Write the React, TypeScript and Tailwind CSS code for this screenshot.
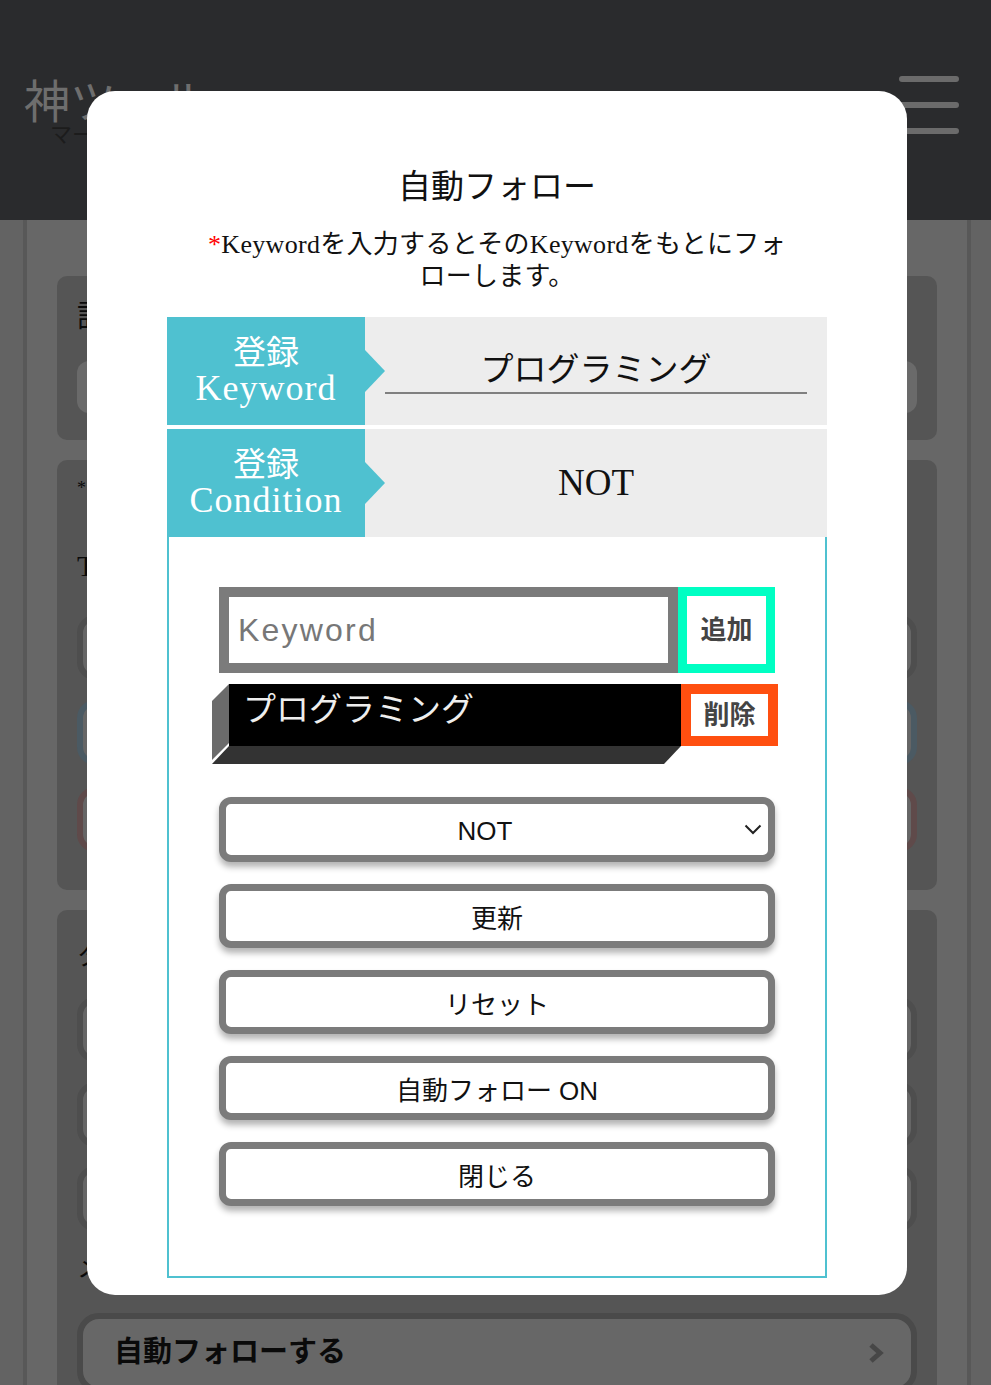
import React from 'react';

const serif = "font-['Liberation_Serif','Noto_Sans_CJK_JP',serif]";
const sans = "font-['Liberation_Sans','Noto_Sans_CJK_JP',sans-serif]";

function Hamburger() {
  return (
    <div className="flex flex-col gap-[20px] pt-0">
      <span className="block h-[6px] w-[60px] rounded-full bg-[#6b6b6b]" />
      <span className="block h-[6px] w-[60px] rounded-full bg-[#6b6b6b]" />
      <span className="block h-[6px] w-[60px] rounded-full bg-[#6b6b6b]" />
    </div>
  );
}

function BgInput({ tone }: { tone: string }) {
  return <div className={`h-[65px] rounded-[18px] border-[6px] bg-[#666666] ${tone}`} />;
}

function Background() {
  return (
    <div className="h-[1385px] w-full overflow-hidden bg-[#636363]">
      <header className="flex h-[220px] items-start justify-between bg-[#2a2b2d] pl-[24px] pr-[32px] pt-[76px]">
        <h1 className={`${serif} pt-[8px] text-[22px] leading-[24px]`}>
          <span className="text-[46px] leading-[38px] text-[#6e6e6e]">神ツール</span>
          <br />
          <span className="ml-[26px] text-[#1c1c1c]">マーケティング</span>
        </h1>
        <Hamburger />
      </header>

      <div className="ml-[23px] mr-[20px] flex h-full flex-col gap-[20px] border-x-4 border-[#585858] bg-[#676767] px-[30px] pt-[56px]">
        <section className="rounded-[10px] bg-[#555555] px-[20px] pb-[27px] pt-[22px]">
          <h3 className={`${serif} text-[30px] leading-[36px] text-[#0a0a0a]`}>設定キーワード</h3>
          <div className="mt-[27px] h-[52px] rounded-[12px] bg-[#6a6a6a]" />
        </section>

        <section className="flex flex-col rounded-[10px] bg-[#555555] px-[20px] pb-[38px] pt-[18px]">
          <p className={`${serif} text-[18px] leading-[20px] text-[#0a0a0a]`}>*アカウントを選択してください</p>
          <h3 className={`${serif} mt-[50px] text-[30px] leading-[36px] text-[#0a0a0a]`}>Twitterアカウント</h3>
          <div className="mt-[31px]"><BgInput tone="border-[#4e4e4e]" /></div>
          <div className="mt-[20px]"><BgInput tone="border-[#4b5a63]" /></div>
          <div className="mt-[22px]"><BgInput tone="border-[#5f4a4a]" /></div>
        </section>

        <section className="flex flex-col rounded-[10px] bg-[#555555] px-[20px] pt-[33px]">
          <h3 className={`${serif} text-[26px] leading-[28px] text-[#0a0a0a]`}>タイムライン</h3>
          <div className="mt-[26px]"><BgInput tone="border-[#4e4e4e]" /></div>
          <div className="mt-[20px]"><BgInput tone="border-[#4e4e4e]" /></div>
          <div className="mt-[19px]"><BgInput tone="border-[#4e4e4e]" /></div>
          <p className={`${serif} mt-[23px] text-[26px] leading-[30px] text-[#0a0a0a]`}>メモ</p>
          <button className="mt-[29px] flex h-[80px] items-center justify-between rounded-[22px] border-[6px] border-[#4a4a4a] bg-[#676767] pl-[31px] pr-[27px]">
            <span className={`${serif} text-[29px] font-bold text-[#0a0a0a]`}>自動フォローする</span>
            <svg width="16" height="22" viewBox="0 0 16 22">
              <polyline points="3,3 12,11 3,19" fill="none" stroke="#474747" strokeWidth="5" />
            </svg>
          </button>
        </section>
      </div>
    </div>
  );
}

function LabelCell({ top, bottom }: { top: string; bottom: string }) {
  return (
    <div className={`relative flex w-[198px] shrink-0 items-center justify-center bg-[#4fc1d0] text-white ${serif}`}>
      <p className="text-center text-[33px] leading-[35px]">
        {top}
        <br />
        <span className="text-[36px] tracking-[1px]">{bottom}</span>
      </p>
      <span className="absolute left-full top-1/2 z-10 -translate-y-1/2 border-y-[21px] border-l-[20px] border-y-transparent border-l-[#4fc1d0]" />
    </div>
  );
}

function ActionButton({ children }: { children: React.ReactNode }) {
  return (
    <button className={`mt-[22px] flex h-[64px] w-full items-center justify-center rounded-[12px] border-[7px] border-[#7b7b7b] bg-white pt-[6px] text-[26px] text-[#111] shadow-[0_5px_6px_rgba(0,0,0,0.3)] ${sans}`}>
      {children}
    </button>
  );
}

function AutoFollowModal() {
  return (
    <div className="absolute left-[87px] top-[91px] w-[820px] rounded-[28px] bg-white pb-[17px] pt-[73px]">
      <h2 className={`${serif} text-center text-[33px] leading-[46px] text-[#111]`}>自動フォロー</h2>
      <p className={`${serif} mx-auto mt-[19px] w-[600px] text-center text-[26px] leading-[32px] tracking-[0.3px] text-[#111]`}>
        <span className="text-[#ff0000]">*</span>Keywordを入力するとそのKeywordをもとにフォローします。
      </p>

      <div className="mx-auto mt-[24px] w-[660px]">
        <div className="flex h-[108px]">
          <LabelCell top="登録" bottom="Keyword" />
          <div className="flex flex-1 items-center bg-[#ededed] px-[20px]">
            <div className={`${serif} w-full border-b-2 border-[#808080] text-center text-[33px] leading-[44px] text-[#111]`}>
              プログラミング
            </div>
          </div>
        </div>
        <div className="mt-[4px] flex h-[108px]">
          <LabelCell top="登録" bottom="Condition" />
          <div className={`${serif} flex flex-1 items-center justify-center bg-[#ededed] text-[37px] text-[#111]`}>NOT</div>
        </div>

        <div className="border-x-2 border-b-2 border-[#4fc1d0] px-[50px] pb-[70px] pt-[50px]">
          <div className="flex h-[86px]">
            <input
              placeholder="Keyword"
              className={`${sans} min-w-0 flex-1 border-[10px] border-[#7b7b7b] bg-white px-[9px] text-[32px] tracking-[2.2px] text-[#333] outline-none placeholder:text-[#777]`}
            />
            <button className={`${sans} w-[97px] border-[9px] border-[#00ffc3] bg-white text-[26px] font-bold text-[#444]`}>追加</button>
          </div>

          <div className="relative mt-[11px] -ml-[7px] flex h-[80px] w-[566px]">
            <svg className="absolute left-0 top-0" width="566" height="80" viewBox="0 0 566 80">
              <polygon points="0,17 17,0 17,59 0,76" fill="#6b6b6b" />
              <polygon points="17,62 469,62 452,80 0,80" fill="#333333" />
            </svg>
            <div className={`${serif} relative ml-[17px] h-[62px] w-[452px] bg-black pl-[14px] pt-[4px] text-[33px] leading-[44px] text-[#eeeeee]`}>
              プログラミング
            </div>
            <button className={`${sans} relative h-[62px] w-[97px] border-[10px] border-[#ff4f10] bg-white text-[26px] font-bold text-[#444]`}>削除</button>
          </div>

          <div className={`mt-[33px] flex h-[65px] items-center rounded-[12px] border-[7px] border-[#7b7b7b] bg-white pt-[3px] shadow-[0_5px_6px_rgba(0,0,0,0.3)] ${sans}`}>
            <span className="flex-1 text-center text-[26px] text-[#111]">NOT</span>
            <svg className="mr-[6px] -mt-[3px]" width="18" height="11" viewBox="0 0 18 11">
              <polyline points="1.5,1.5 9,9 16.5,1.5" fill="none" stroke="#222" strokeWidth="2" />
            </svg>
          </div>

          <ActionButton>更新</ActionButton>
          <ActionButton>リセット</ActionButton>
          <ActionButton>自動フォロー ON</ActionButton>
          <ActionButton>閉じる</ActionButton>
        </div>
      </div>
    </div>
  );
}

export default function App() {
  return (
    <div className="relative h-[1385px] w-full overflow-hidden">
      <Background />
      <AutoFollowModal />
    </div>
  );
}
